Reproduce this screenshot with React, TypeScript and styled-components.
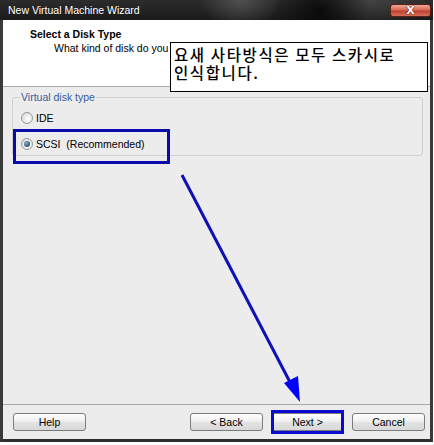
import React from "react";
import styled, { createGlobalStyle } from "styled-components";

const Global = createGlobalStyle`
  html, body { margin: 0; padding: 0; background: #ffffff; }
  body { font-family: "Liberation Sans", Arial, sans-serif; }
  * { box-sizing: border-box; }
`;

const Window = styled.div`
  width: 433px;
  height: 442px;
  display: flex;
  flex-direction: column;
  background: #3a3a3a;
  border-left: 3px solid #3a3a3a;
  border-right: 3px solid #3a3a3a;
  border-bottom: 3px solid #2e2e2e;
`;

const TitleBar = styled.div`
  height: 20px;
  margin: 0 -3px;
  padding: 0 2px 0 8px;
  display: flex;
  align-items: center;
  justify-content: space-between;
  background:
    radial-gradient(ellipse 40px 30px at 240px 0px, rgba(110,110,110,0.55), transparent),
    radial-gradient(ellipse 50px 40px at 320px 10px, rgba(0,0,0,0.7), transparent),
    radial-gradient(ellipse 60px 30px at 370px 0px, rgba(90,90,90,0.5), transparent),
    linear-gradient(#2c2c2c, #1a1a1a);
`;

const TitleText = styled.span`
  color: #ffffff;
  font-size: 10.5px;
  line-height: 12px;
`;

const CloseButton = styled.div`
  width: 41px;
  height: 13px;
  border-radius: 3px;
  border: 1px solid #5a2018;
  background: linear-gradient(#eaa898, #d66a56 45%, #bc4030 55%, #d87058);
  display: flex;
  align-items: center;
  justify-content: center;
  color: #ffffff;
  font-family: "DejaVu Sans", sans-serif;
  font-weight: bold;
  font-size: 11px;
  line-height: 11px;
  text-shadow: 0 0 1px #4a0000, 0 0 1px #4a0000;
`;

const Client = styled.div`
  position: relative;
  flex: 1;
  display: flex;
  flex-direction: column;
  background: #ececec;
`;

const Header = styled.div`
  height: 67px;
  background: #ffffff;
  border-bottom: 1px solid #a8a8a8;
  padding: 7px 0 0 27px;
  display: flex;
  flex-direction: column;
`;

const PageTitle = styled.div`
  font-weight: bold;
  font-size: 10.5px;
  line-height: 14px;
  color: #000;
`;

const PageSubtitle = styled.div`
  font-size: 10.5px;
  line-height: 14px;
  color: #000;
  margin-left: 24px;
  width: 114px;
  white-space: nowrap;
  overflow: hidden;
`;

const Callout = styled.div`
  position: absolute;
  left: 167px;
  top: 22px;
  width: 258px;
  height: 50px;
  background: #ffffff;
  border: 1px solid #000000;
  padding: 2px 0 0 3px;
  font-family: "Noto Sans CJK KR", sans-serif;
  font-weight: 500;
  font-size: 15.5px;
  line-height: 18px;
  letter-spacing: 1.6px;
  color: #000;
  z-index: 2;
`;

const Body = styled.div`
  position: relative;
  flex: 1;
  padding: 4px 7px 0 9px;
`;

const GroupBox = styled.fieldset`
  margin: 0;
  height: 65px;
  border: 1px solid #d0d0c8;
  border-radius: 3px;
  padding: 6px 7px 2px 7px;
  display: flex;
  flex-direction: column;
  gap: 10px;
`;

const Legend = styled.legend`
  padding: 0 1px;
  font-size: 10.5px;
  line-height: 13px;
  color: #3b5b9b;
`;

const RadioRow = styled.label`
  display: flex;
  align-items: center;
  gap: 3px;
  height: 16px;
  font-size: 10.5px;
  color: #000;
`;

const RadioCircle = styled.span<{ $checked?: boolean }>`
  width: 12px;
  height: 12px;
  margin-left: 1px;
  border-radius: 50%;
  border: 1px solid #9a9a9a;
  background: radial-gradient(circle at 60% 60%, #ffffff, #dcdcdc 80%);
  display: flex;
  align-items: center;
  justify-content: center;
  &::after {
    content: "";
    display: ${(p) => (p.$checked ? "block" : "none")};
    width: 6px;
    height: 6px;
    border-radius: 50%;
    background: radial-gradient(circle at 35% 35%, #8fb0d0, #2a5478 70%);
  }
`;

const Highlight = styled.div`
  position: absolute;
  left: 10px;
  top: 42px;
  width: 157px;
  height: 35px;
  border: 3px solid #0a0aa8;
  pointer-events: none;
`;

const ArrowSvg = styled.svg`
  position: absolute;
  left: 0;
  top: 0;
  width: 427px;
  height: 317px;
  pointer-events: none;
`;

const Footer = styled.div`
  height: 35px;
  border-top: 1px solid #a8a8a8;
  padding: 8px 5px 0 10px;
  display: flex;
  align-items: flex-start;
`;

const Spacer = styled.div`
  flex: 1;
`;

const Buttons = styled.div`
  display: flex;
  gap: 8px;
`;

const Button = styled.button`
  width: 73px;
  height: 18px;
  padding: 0;
  border: 1px solid #7c7c7c;
  border-radius: 3px;
  background: linear-gradient(#ffffff, #f0f0f0 45%, #e2e2e2 55%, #d8d8d8);
  font-family: "Liberation Sans", Arial, sans-serif;
  font-size: 10.5px;
  color: #000;
`;

const NextWrap = styled.span`
  position: relative;
  display: inline-flex;
  &::after {
    content: "";
    position: absolute;
    left: 0;
    right: 0;
    top: -3px;
    bottom: -3px;
    border: 3px solid #0a0ad0;
  }
`;

export default function App() {
  return (
    <>
      <Global />
      <Window>
        <TitleBar>
          <TitleText>New Virtual Machine Wizard</TitleText>
          <CloseButton>X</CloseButton>
        </TitleBar>
        <Client>
          <Header>
            <PageTitle>Select a Disk Type</PageTitle>
            <PageSubtitle>What kind of disk do you</PageSubtitle>
          </Header>
          <Callout>
            요새 사타방식은 모두 스카시로
            <br />
            인식합니다.
          </Callout>
          <Body>
            <GroupBox>
              <Legend>Virtual disk type</Legend>
              <RadioRow>
                <RadioCircle />
                IDE
              </RadioRow>
              <RadioRow>
                <RadioCircle $checked />
                SCSI&nbsp;&nbsp;(Recommended)
              </RadioRow>
            </GroupBox>
            <Highlight />
            <ArrowSvg viewBox="0 0 427 317">
              <line x1="179" y1="88" x2="289" y2="299" stroke="#1010b8" strokeWidth="3" />
              <polygon points="297,315 281,296 295,289" fill="#0000ff" />
            </ArrowSvg>
          </Body>
          <Footer>
            <Button>Help</Button>
            <Spacer />
            <Buttons>
              <Button>&lt; Back</Button>
              <NextWrap>
                <Button>Next &gt;</Button>
              </NextWrap>
              <Button>Cancel</Button>
            </Buttons>
          </Footer>
        </Client>
      </Window>
    </>
  );
}
